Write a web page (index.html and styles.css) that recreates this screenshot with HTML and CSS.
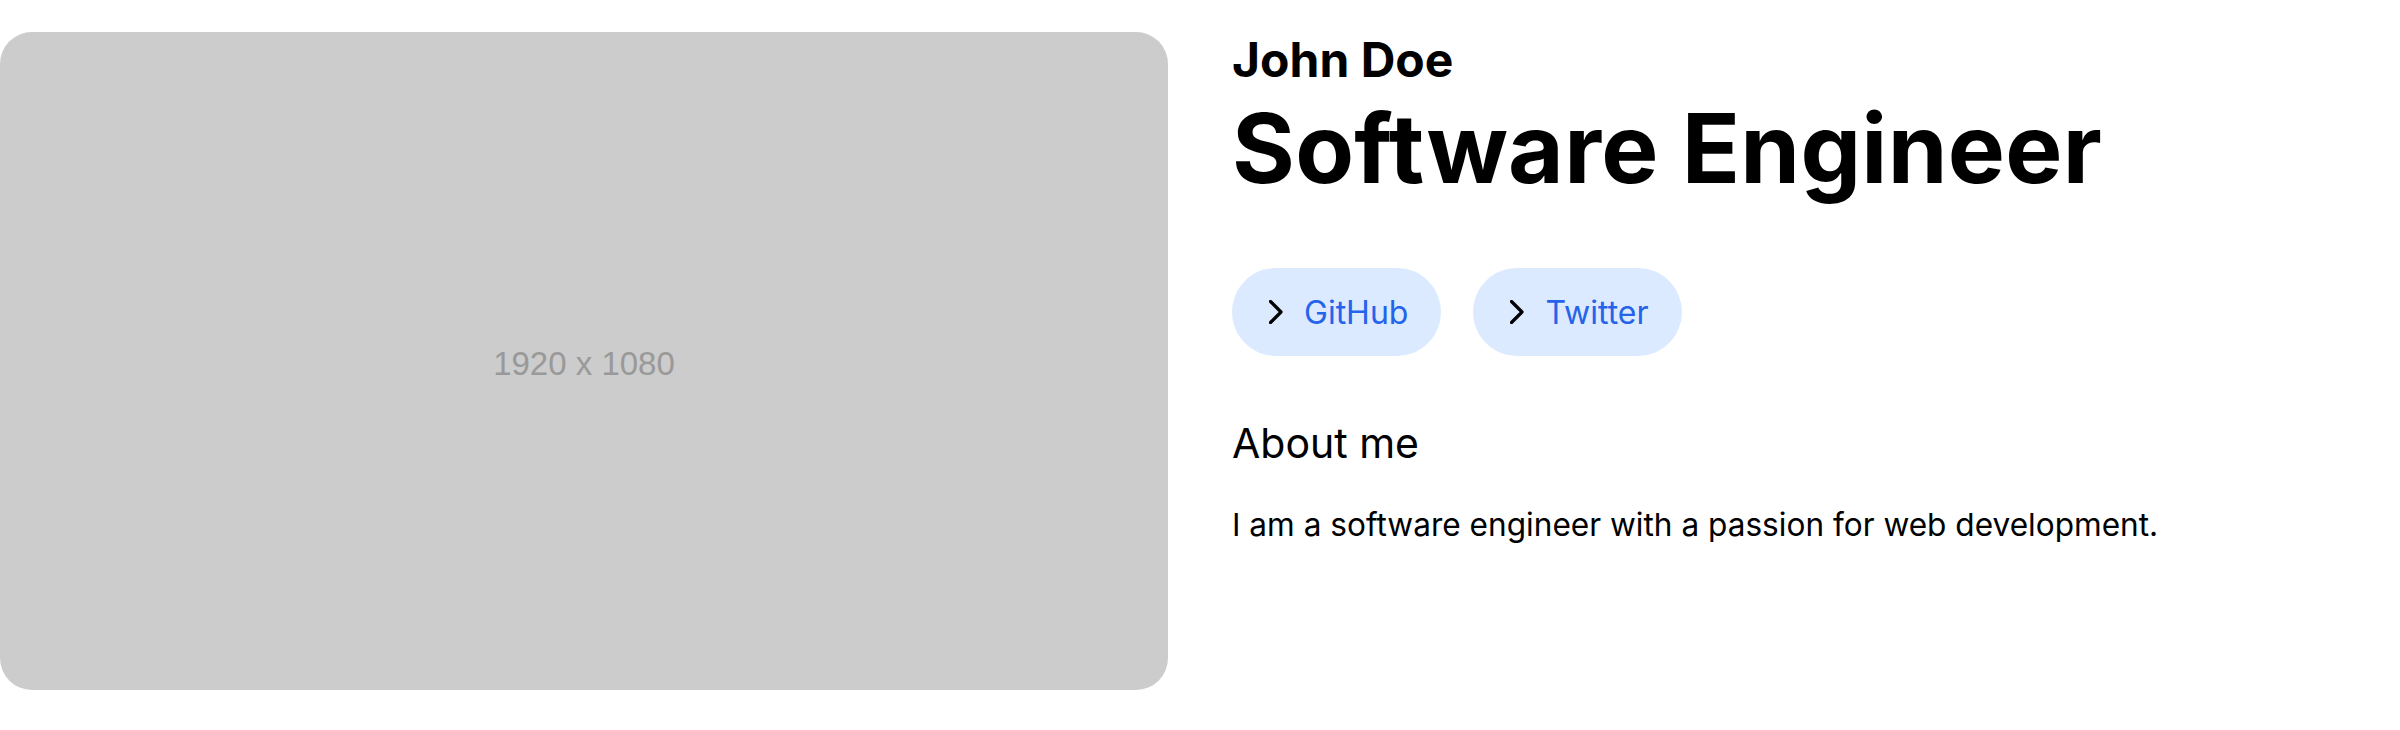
FILE: index.html
```html
<!DOCTYPE html>
<html lang="en">
<head>
<meta charset="utf-8">
<title>John Doe</title>
<link rel="stylesheet" href="styles.css">
</head>
<body>
<main class="hero">
  <div class="photo"><span class="photo-label">1920 x 1080</span></div>
  <section class="info">
    <h2 class="name">John Doe</h2>
    <h1 class="title">Software Engineer</h1>
    <nav class="links">
      <a class="pill" href="#">
        <svg class="chev" width="14" height="24" viewBox="0 0 14 24" aria-hidden="true"><polyline points="1.5,1.5 12,12 1.5,22.5" fill="none" stroke="#000" stroke-width="3.2" stroke-linecap="round" stroke-linejoin="round"/></svg>
        <span>GitHub</span>
      </a>
      <a class="pill" href="#">
        <svg class="chev" width="14" height="24" viewBox="0 0 14 24" aria-hidden="true"><polyline points="1.5,1.5 12,12 1.5,22.5" fill="none" stroke="#000" stroke-width="3.2" stroke-linecap="round" stroke-linejoin="round"/></svg>
        <span>Twitter</span>
      </a>
    </nav>
    <h3 class="about">About me</h3>
    <p class="bio">I am a software engineer with a passion for web development.</p>
  </section>
</main>
</body>
</html>
```

FILE: styles.css
```css
html, body {
  margin: 0;
  padding: 0;
  background: #ffffff;
}

body {
  font-family: Inter, "Noto Sans", sans-serif;
  color: #000;
}

.hero {
  display: flex;
  align-items: flex-start;
  gap: 64px;
  padding-top: 32px;
}

.photo {
  flex: 0 0 1168px;
  height: 658px;
  background: #cccccc;
  border-radius: 32px;
  display: flex;
  align-items: center;
  justify-content: center;
}

.photo-label {
  font-family: "Liberation Sans", Arial, sans-serif;
  font-size: 33px;
  color: #999999;
  padding-top: 6px;
}

.info {
  display: flex;
  flex-direction: column;
  align-items: flex-start;
}

.name {
  margin: 0;
  font-size: 48px;
  line-height: 56px;
  font-weight: 700;
}

.title {
  margin: 12px 0 0;
  font-size: 96px;
  line-height: 96px;
  font-weight: 700;
  letter-spacing: 0.3px;
}

.links {
  display: flex;
  gap: 32px;
  margin-top: 72px;
}

.pill {
  display: flex;
  align-items: center;
  gap: 21px;
  height: 88px;
  padding: 0 33px 0 37px;
  border-radius: 44px;
  background: #dbeafe;
  color: #2563eb;
  text-decoration: none;
  font-size: 32px;
  font-weight: 400;
}

.chev {
  display: block;
  flex: 0 0 auto;
}

.about {
  margin: 63px 0 0;
  font-size: 41px;
  line-height: 48px;
  font-weight: 400;
}

.bio {
  margin: 34px 0 0;
  font-size: 31.6px;
  line-height: 48px;
  font-weight: 400;
}
```
